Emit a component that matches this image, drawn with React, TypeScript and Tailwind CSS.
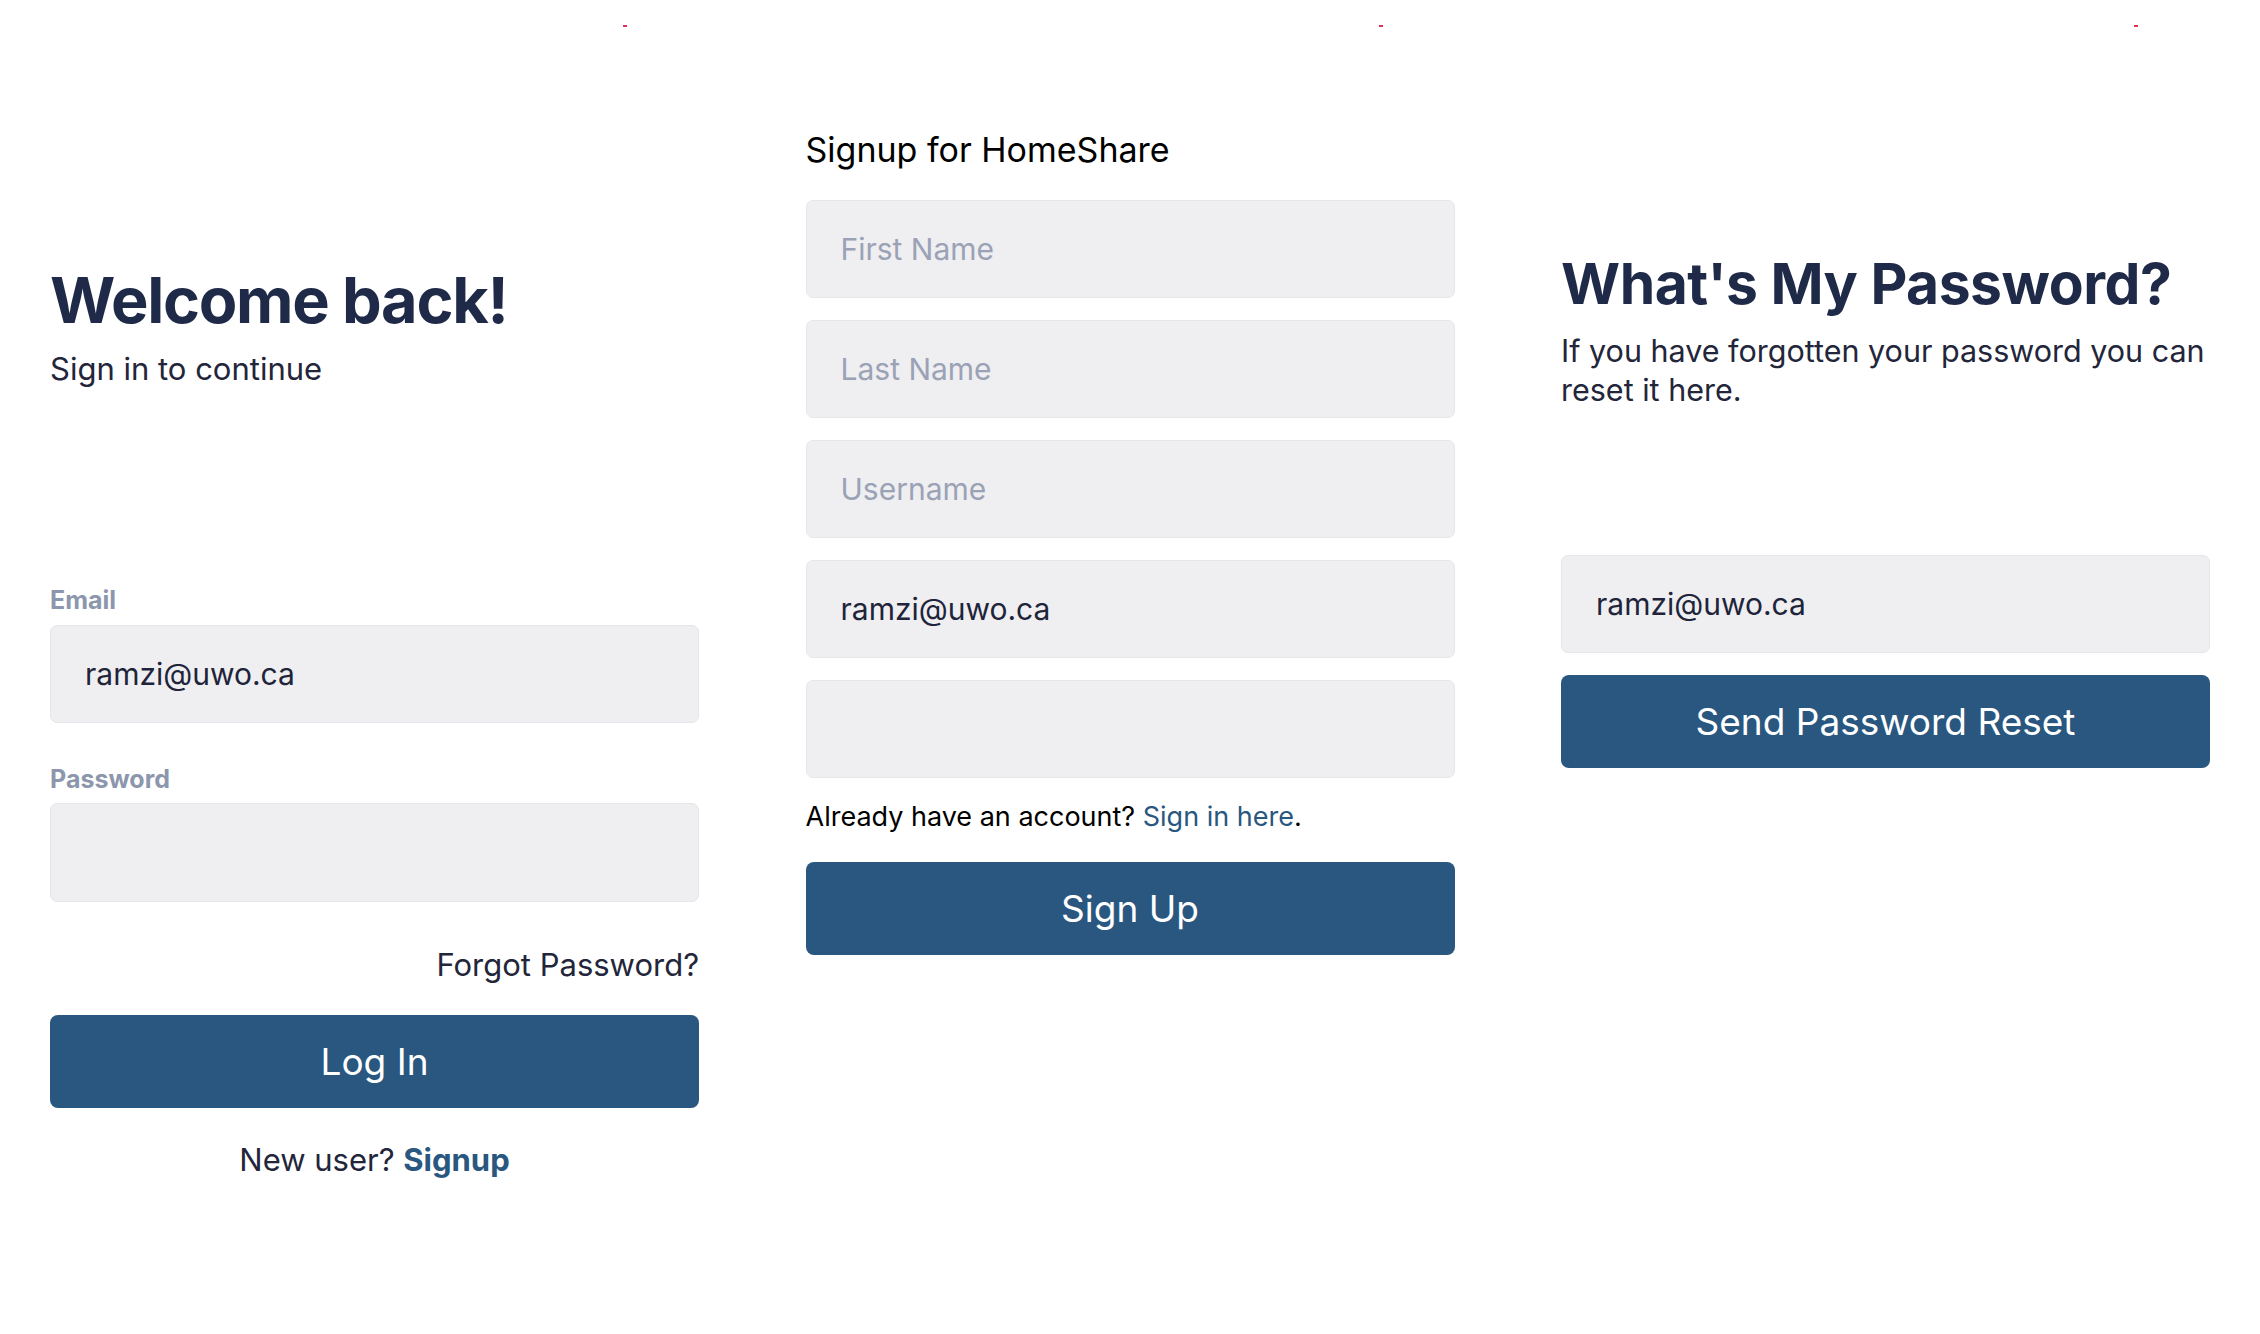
import React from "react";

const font = { fontFamily: "Inter, 'Noto Sans', sans-serif" };

const Dot: React.FC = () => <div className="ml-[573px] mt-[25px] h-[2px] w-[4px] bg-[#e0305a]" />;

const Field: React.FC<{ value?: string; placeholder?: string; className?: string }> = ({ value, placeholder, className }) => (
  <div
    className={`flex h-[98px] items-center rounded-[7px] border border-[#e6e6ea] bg-[#efeef0] px-[34px] text-[30px] ${className ?? ""}`}
  >
    {value ? (
      <span className="text-[#20243a]">{value}</span>
    ) : (
      <span className="text-[#9aa2b6]">{placeholder}</span>
    )}
  </div>
);

const Button: React.FC<{ label: string; className?: string }> = ({ label, className }) => (
  <button
    className={`flex h-[93px] w-full items-center justify-center rounded-[8px] bg-[#29577f] text-[37px] text-white ${className ?? ""}`}
  >
    {label}
  </button>
);

const LoginScreen: React.FC = () => (
  <div className="flex w-[649px] flex-col">
    <Dot />
    <h1 className="mt-[242px] text-[63px] font-bold leading-[63px] tracking-[-1.3px] text-[#1f2a48]">Welcome back!</h1>
    <p className="mt-[17px] text-[31px] leading-[40px] text-[#23263a]">Sign in to continue</p>

    <label className="mt-[197px] text-[25px] font-bold leading-[28px] text-[#8c96ac]">Email</label>
    <Field value="ramzi@uwo.ca" className="mt-[11px]" />

    <label className="mt-[42px] text-[25px] font-bold leading-[28px] text-[#8c96ac]">Password</label>
    <Field className="mt-[10px] h-[99px]" />

    <div className="mt-[43px] text-right text-[31px] leading-[40px] text-[#23263a]">Forgot Password?</div>
    <Button label="Log In" className="mt-[30px]" />

    <div className="mt-[32px] text-center text-[31px] leading-[40px] text-[#23263a]">
      New user? <span className="font-bold text-[#29577f]">Signup</span>
    </div>
  </div>
);

const SignupScreen: React.FC = () => (
  <div className="flex w-[649px] flex-col">
    <Dot />
    <h2 className="mt-[103px] text-[34px] leading-[40px] text-black">Signup for HomeShare</h2>
    <div className="mt-[30px] flex flex-col gap-[22px]">
      <Field placeholder="First Name" />
      <Field placeholder="Last Name" />
      <Field placeholder="Username" />
      <Field value="ramzi@uwo.ca" />
      <Field />
    </div>
    <div className="mt-[21px] text-[27px] leading-[36px] text-black">
      Already have an account? <span className="text-[#29577f]">Sign in here</span>.
    </div>
    <Button label="Sign Up" className="mt-[27px] h-[92px]" />
  </div>
);

const ResetScreen: React.FC = () => (
  <div className="flex w-[649px] flex-col">
    <Dot />
    <h1 className="mt-[228px] whitespace-nowrap text-[57px] font-bold leading-[57px] tracking-[-0.5px] text-[#1f2a48]">
      What's My Password?
    </h1>
    <p className="mt-[19px] text-[30.5px] leading-[39px] text-[#23263a]">
      If you have forgotten your password you can reset it here.
    </p>
    <Field value="ramzi@uwo.ca" className="mt-[146px]" />
    <Button label="Send Password Reset" className="mt-[22px] h-[92px]" />
  </div>
);

export default function App() {
  return (
    <div className="flex h-[1334px] w-[2260px] justify-between overflow-hidden bg-white px-[50px]" style={font}>
      <LoginScreen />
      <SignupScreen />
      <ResetScreen />
    </div>
  );
}
